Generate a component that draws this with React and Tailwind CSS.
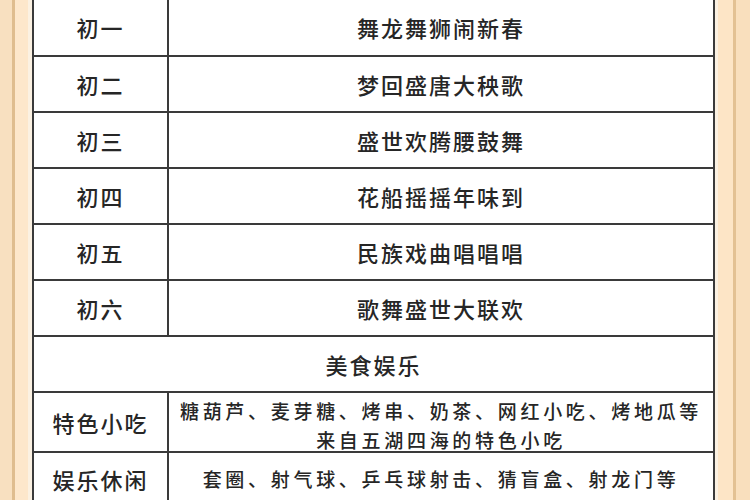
import React from 'react';

const days = [
  ['初一', '舞龙舞狮闹新春'],
  ['初二', '梦回盛唐大秧歌'],
  ['初三', '盛世欢腾腰鼓舞'],
  ['初四', '花船摇摇年味到'],
  ['初五', '民族戏曲唱唱唱'],
  ['初六', '歌舞盛世大联欢'],
];

const font = { fontFamily: '"Noto Sans CJK SC", "Noto Sans", sans-serif' };

const Strip = ({ side }) => (
  <div className="h-full w-full flex">
    {side === 'left' ? (
      <>
        <div className="w-[12px] h-full bg-[#f8e0c0]" />
        <div className="w-[3px] h-full bg-[#dfbd8f]" />
        <div className="w-[13px] h-full bg-[#fde7cb]" />
        <div className="w-[4px] h-full bg-[#fbf1e2]" />
      </>
    ) : (
      <>
        <div className="w-[3px] h-full bg-[#fbf1e2]" />
        <div className="w-[15px] h-full bg-[#fde5c6]" />
        <div className="w-[3px] h-full bg-[#e3c193]" />
        <div className="w-[14px] h-full bg-[#f9dfbd]" />
      </>
    )}
  </div>
);

export default function App() {
  return (
    <div className="w-[750px] h-[500px] overflow-hidden flex bg-white text-[#262626] font-medium" style={font}>
      <div className="w-[32px] h-full shrink-0">
        <Strip side="left" />
      </div>

      <div className="w-[683px] shrink-0 border-x-2 border-[#3a3a3a] bg-white">
        {days.map(([day, show], i) => (
          <div
            key={day}
            className={`flex border-b-2 border-[#3a3a3a] ${i === 0 ? 'h-[57px]' : 'h-[56px]'}`}
          >
            <div className="w-[135px] shrink-0 border-r-2 border-[#3a3a3a] flex items-center justify-center text-[22px] tracking-[2px]">
              {day}
            </div>
            <div className="flex-1 flex items-center justify-center text-[22px] tracking-[2px]">
              {show}
            </div>
          </div>
        ))}

        <div className="h-[56px] flex items-center justify-center border-b-2 border-[#3a3a3a] text-[22px] tracking-[2px]">
          美食娱乐
        </div>

        <div className="h-[60px] flex border-b-2 border-[#3a3a3a]">
          <div className="w-[135px] shrink-0 border-r-2 border-[#3a3a3a] flex items-center justify-center text-[22px] tracking-[2px]">
            特色小吃
          </div>
          <div className="flex-1 pt-[3px] text-center text-[19px] leading-[29px] tracking-[3.7px] whitespace-nowrap">
            糖葫芦、麦芽糖、烤串、奶茶、网红小吃、烤地瓜等
            <br />
            来自五湖四海的特色小吃
          </div>
        </div>

        <div className="h-[54px] flex border-b-2 border-[#3a3a3a]">
          <div className="w-[135px] shrink-0 border-r-2 border-[#3a3a3a] flex items-center justify-center text-[22px] tracking-[2px]">
            娱乐休闲
          </div>
          <div className="flex-1 flex items-center justify-center text-[19px] tracking-[3.7px] whitespace-nowrap">
            套圈、射气球、乒乓球射击、猜盲盒、射龙门等
          </div>
        </div>
      </div>

      <div className="w-[35px] h-full shrink-0">
        <Strip side="right" />
      </div>
    </div>
  );
}
